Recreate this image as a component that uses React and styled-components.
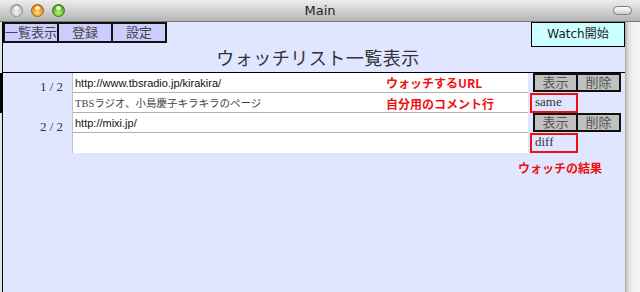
import React from 'react'
import styled, { createGlobalStyle } from 'styled-components'

//----------------CSS------------------------>>>//
const Global = createGlobalStyle`
  html, body { margin: 0; padding: 0; }
  body {
    width: 640px;
    height: 292px;
    overflow: hidden;
    background: #e4e4e4;
    font-family: "Liberation Serif", "Noto Sans CJK JP", serif;
  }
`
const Window = styled.div`
  width: 640px;
  height: 292px;
  display: flex;
  flex-direction: column;
`
const TitleBar = styled.div`
  height: 21px;
  flex: 0 0 21px;
  border-bottom: 1px solid #7a7a7a;
  background: linear-gradient(#ededed, #d2d2d2 50%, #b4b4b4);
  display: grid;
  grid-template-columns: 1fr auto 1fr;
  align-items: center;
`
const Lights = styled.div`
  display: flex;
  gap: 8px;
  padding-left: 10px;
`
const Light = styled.span`
  width: 13px;
  height: 13px;
  border-radius: 50%;
  box-sizing: border-box;
  border: 1px solid ${p => p.$edge};
  background: radial-gradient(circle at 50% 70%, ${p => p.$glow} 0%, ${p => p.$color} 55%, ${p => p.$edge} 100%);
  position: relative;
  &::after {
    content: '';
    position: absolute;
    left: 3px;
    top: 1px;
    width: 5px;
    height: 4px;
    border-radius: 50%;
    background: rgba(255,255,255,0.85);
  }
`
const WinTitle = styled.div`
  font-family: "DejaVu Sans", "Liberation Sans", sans-serif;
  font-size: 13px;
  color: #222;
`
const Pill = styled.span`
  justify-self: end;
  margin-right: 8px;
  width: 19px;
  height: 9px;
  box-sizing: border-box;
  border-radius: 5px;
  border: 1px solid #7c7c7c;
  background: linear-gradient(#ffffff, #cfcfcf);
`
const Body = styled.div`
  flex: 1;
  display: flex;
`
const Content = styled.div`
  margin-left: 2px;
  width: 622px;
  border-left: 1px solid #000;
  background: #e0e6ff;
  display: flex;
  flex-direction: column;
`
const Edge = styled.div`
  flex: 1;
  background: linear-gradient(to right, #a8a8a8, #dcdcdc 3px, #f2f2f2 8px, #f6f6f6);
`
const Toolbar = styled.div`
  height: 26px;
  display: flex;
  align-items: flex-start;
  justify-content: space-between;
`
const ToolGroup = styled.div`
  display: flex;
`
const ToolButton = styled.button`
  width: 56px;
  height: 21px;
  margin: 0 0 0 -2px;
  padding: 0;
  border: 2px solid #111;
  background: #ccccff;
  font-family: "Liberation Serif", "Noto Sans CJK JP", serif;
  font-size: 13px;
  line-height: 16px;
  color: #444;
  &:first-child { margin-left: 0; }
`
const WatchButton = styled.button`
  width: 94px;
  height: 25px;
  margin: 0;
  padding: 0 0 4px;
  border: 1px solid #000;
  background: #ccffff;
  font-family: "DejaVu Sans", "Noto Sans CJK JP", sans-serif;
  font-size: 12px;
  color: #222;
`
const PageTitle = styled.h1`
  margin: 0;
  height: 24px;
  border-bottom: 1px solid #000;
  text-align: center;
  padding-left: 8px;
  font-family: "Liberation Serif", "Noto Sans CJK JP", serif;
  font-weight: normal;
  font-size: 18px;
  line-height: 22px;
  color: #333;
  letter-spacing: 0.5px;
`
const Row = styled.div`
  display: grid;
  grid-template-columns: 69px 456px 1fr;
  box-shadow: ${p => (p.$selected ? '-3px 0 0 #000' : 'none')};
`
const Label = styled.div`
  text-align: right;
  padding: 6px 9px 0 0;
  font-size: 13px;
  line-height: 16px;
  color: #333;
`
const Fields = styled.div`
  display: flex;
  flex-direction: column;
  background: #fff;
  border-left: 1px solid #c4c4c4;
`
const Field = styled.div`
  height: 19px;
  border-bottom: ${p => (p.$last ? 'none' : '1px solid #b0b0b0')};
  display: grid;
  grid-template-columns: 311px 1fr;
  align-items: center;
  padding-left: 2px;
  font-family: ${p => (p.$mono ? '"Liberation Serif", "Noto Sans CJK JP", serif' : '"Liberation Sans", "Noto Sans CJK JP", sans-serif')};
  font-size: ${p => (p.$mono ? '10.5px' : '11px')};
  color: ${p => (p.$mono ? '#444' : '#111')};
  white-space: nowrap;
`
const Note = styled.span`
  font-family: "Noto Sans CJK JP", sans-serif;
  font-weight: bold;
  font-size: 12px;
  color: #f01010;
  line-height: 14px;
  padding-top: ${p => p.$top || 0}px;
`
const Side = styled.div`
  display: flex;
  flex-direction: column;
  padding-left: 2px;
`
const ActionRow = styled.div`
  display: flex;
  padding-left: 3px;
  height: 20px;
`
const ActionButton = styled.button`
  width: 45px;
  height: 19px;
  margin: 0 0 0 -2px;
  padding: 0;
  border: 2px solid #111;
  background: #c0c0c0;
  font-family: "Liberation Serif", "Noto Sans CJK JP", serif;
  font-size: 13px;
  line-height: 14px;
  color: #555;
  &:first-child { margin-left: 0; }
`
const Result = styled.div`
  width: 48px;
  height: 20px;
  box-sizing: border-box;
  border: 2px solid #ee1111;
  padding: 0 0 0 3px;
  font-size: 13px;
  line-height: 13px;
  color: #333;
`
const Footnote = styled.div`
  padding: 6px 0 0 515px;
`

const rows = [
  { no: '1 / 2', url: 'http://www.tbsradio.jp/kirakira/', comment: 'TBSラジオ、小島慶子キラキラのページ', result: 'same' },
  { no: '2 / 2', url: 'http://mixi.jp/', comment: '', result: 'diff' },
]

export default function App() {
  return (
    <Window>
      <Global />
      <TitleBar>
        <Lights>
          <Light $color="#c9c9c9" $glow="#f4f4f4" $edge="#8e8e8e" />
          <Light $color="#f0962a" $glow="#ffe070" $edge="#b05a10" />
          <Light $color="#5fb832" $glow="#c8f070" $edge="#3a7a18" />
        </Lights>
        <WinTitle>Main</WinTitle>
        <Pill />
      </TitleBar>
      <Body>
        <Content>
          <Toolbar>
            <ToolGroup>
              <ToolButton>一覧表示</ToolButton>
              <ToolButton>登録</ToolButton>
              <ToolButton>設定</ToolButton>
            </ToolGroup>
            <WatchButton>Watch開始</WatchButton>
          </Toolbar>
          <PageTitle>ウォッチリスト一覧表示</PageTitle>
          {rows.map((r, i) => (
            <Row key={r.no} $selected={i === 0}>
              <Label>{r.no}</Label>
              <Fields>
                <Field>
                  <span>{r.url}</span>
                  {i === 0 && <Note>ウォッチするURL</Note>}
                </Field>
                <Field $mono $last={i === rows.length - 1}>
                  <span>{r.comment}</span>
                  {i === 0 && <Note $top={2}>自分用のコメント行</Note>}
                </Field>
              </Fields>
              <Side>
                <ActionRow>
                  <ActionButton>表示</ActionButton>
                  <ActionButton>削除</ActionButton>
                </ActionRow>
                <Result>{r.result}</Result>
              </Side>
            </Row>
          ))}
          <Footnote>
            <Note>ウォッチの結果</Note>
          </Footnote>
        </Content>
        <Edge />
      </Body>
    </Window>
  )
}
